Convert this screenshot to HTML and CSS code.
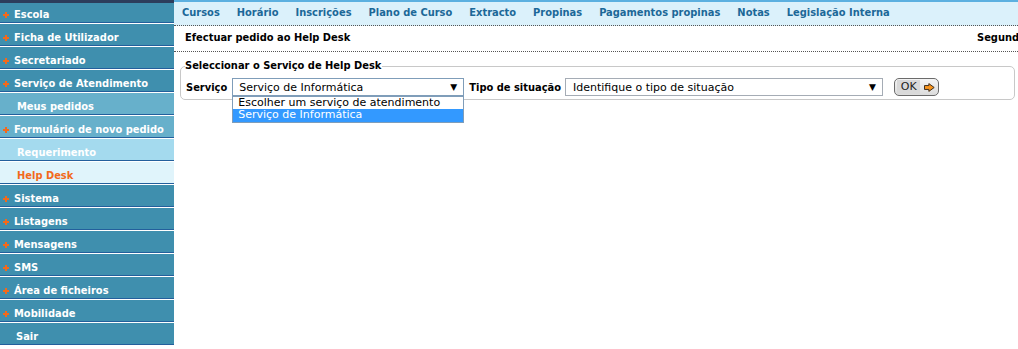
FILE: index.html
```html
<!DOCTYPE html>
<html lang="pt">
<head>
<meta charset="utf-8">
<title>Help Desk</title>
<link rel="stylesheet" href="styles.css">
</head>
<body>
<div class="page">
  <nav class="side">
    <a class="item first"><svg class="pl" width="6" height="6" viewBox="0 0 6 6"><path d="M0 3H6M3 0V6"/></svg>Escola</a>
    <a class="item"><svg class="pl" width="6" height="6" viewBox="0 0 6 6"><path d="M0 3H6M3 0V6"/></svg>Ficha de Utilizador</a>
    <a class="item"><svg class="pl" width="6" height="6" viewBox="0 0 6 6"><path d="M0 3H6M3 0V6"/></svg>Secretariado</a>
    <a class="item"><svg class="pl" width="6" height="6" viewBox="0 0 6 6"><path d="M0 3H6M3 0V6"/></svg>Serviço de Atendimento</a>
    <a class="item lvl1 sub">Meus pedidos</a>
    <a class="item lvl1"><svg class="pl" width="6" height="6" viewBox="0 0 6 6"><path d="M0 3H6M3 0V6"/></svg>Formulário de novo pedido</a>
    <a class="item lvl2 sub">Requerimento</a>
    <a class="item lvl3 sub">Help Desk</a>
    <a class="item"><svg class="pl" width="6" height="6" viewBox="0 0 6 6"><path d="M0 3H6M3 0V6"/></svg>Sistema</a>
    <a class="item"><svg class="pl" width="6" height="6" viewBox="0 0 6 6"><path d="M0 3H6M3 0V6"/></svg>Listagens</a>
    <a class="item"><svg class="pl" width="6" height="6" viewBox="0 0 6 6"><path d="M0 3H6M3 0V6"/></svg>Mensagens</a>
    <a class="item"><svg class="pl" width="6" height="6" viewBox="0 0 6 6"><path d="M0 3H6M3 0V6"/></svg>SMS</a>
    <a class="item"><svg class="pl" width="6" height="6" viewBox="0 0 6 6"><path d="M0 3H6M3 0V6"/></svg>Área de ficheiros</a>
    <a class="item"><svg class="pl" width="6" height="6" viewBox="0 0 6 6"><path d="M0 3H6M3 0V6"/></svg>Mobilidade</a>
    <a class="item exit">Sair</a>
  </nav>
  <main class="main">
    <div class="tabs">
      <a>Cursos</a>
      <a>Horário</a>
      <a>Inscrições</a>
      <a>Plano de Curso</a>
      <a>Extracto</a>
      <a>Propinas</a>
      <a>Pagamentos propinas</a>
      <a>Notas</a>
      <a>Legislação Interna</a>
    </div>
    <div class="head">
      <h1 class="title">Efectuar pedido ao Help Desk</h1>
      <span class="date">Segunda-feira, 15 de Março de 2010</span>
    </div>
    <fieldset class="box">
      <legend class="legend">Seleccionar o Serviço de Help Desk</legend>
      <div class="row">
        <span class="label">Serviço</span>
        <div class="select s1 focus">
          <span class="val">Serviço de Informática</span>
          <span class="arrow">▼</span>
          <ul class="dropdown">
            <li>Escolher um serviço de atendimento</li>
            <li class="sel">Serviço de Informática</li>
          </ul>
        </div>
        <span class="label l2">Tipo de situação</span>
        <div class="select s2">
          <span class="val">Identifique o tipo de situação</span>
          <span class="arrow">▼</span>
        </div>
        <span class="ok">
          <span class="ok-txt">OK</span>
          <svg class="ok-ico" width="11" height="9" viewBox="0 0 11 9"><path d="M0.5 2.5 H5 V0.5 L10.5 4.5 L5 8.5 V6.5 H0.5 Z" fill="#f7941d" stroke="#3a2a1a" stroke-width="1" stroke-linejoin="miter"/></svg>
        </span>
      </div>
    </fieldset>
  </main>
</div>
</body>
</html>
```

FILE: styles.css
```css
html, body {
  margin: 0;
  padding: 0;
}
body {
  width: 1018px;
  height: 349px;
  overflow: hidden;
  background: #fff;
  font-family: "DejaVu Sans Condensed", "DejaVu Sans", sans-serif;
  font-size: 11px;
}
.page {
  display: flex;
  align-items: flex-start;
}
.side {
  width: 174px;
  flex: 0 0 174px;
  display: flex;
  flex-direction: column;
  gap: 1px;
  padding-top: 1px;
  background: #fff;
}
.item {
  display: flex;
  align-items: center;
  box-sizing: border-box;
  height: 22px;
  padding: 7px 0 0 3px;
  line-height: 14px;
  background: #3f8fae;
  border-bottom: 1px solid #235f9c;
  color: #fff;
  font-weight: bold;
  white-space: nowrap;
}
.item.first {
  margin-top: -1px;
  border-top: 1px solid #2c3d5c;
  box-shadow: inset 0 2px 0 #2c3d5c;
  height: 23px;
  padding-top: 6px;
}
.pl {
  flex: 0 0 6px;
  width: 6px;
  height: 6px;
  display: block;
  margin-right: 5px;
  stroke: #f26a1b;
  stroke-width: 2;
  fill: none;
  overflow: visible;
}
.item.sub { padding-left: 17px; }
.item.exit { padding-left: 16px; }
.item.lvl1 { background: #67b0cb; }
.item.lvl2 { background: #a4daee; }
.item.lvl3 { background: #e0f4fb; color: #f26a1b; }

.main {
  flex: 1;
  min-width: 0;
}
.tabs {
  box-sizing: border-box;
  height: 26px;
  border-top: 2px solid #5cb0e0;
  border-bottom: 1px dotted #555;
  background: #dbf1fb;
  display: flex;
  gap: 17px;
  padding: 4px 0 0 8px;
  line-height: 14px;
  white-space: nowrap;
}
.tabs a {
  color: #1c6898;
  font-weight: bold;
}
.head {
  box-sizing: border-box;
  height: 26px;
  display: grid;
  grid-template-columns: 792px max-content;
  padding: 5px 0 0 11px;
  border-bottom: 1px dotted #555;
  overflow: hidden;
  white-space: nowrap;
}
.title {
  margin: 0;
  font-size: 11px;
  font-weight: bold;
  line-height: 14px;
  color: #000;
}
.date {
  font-weight: bold;
  line-height: 14px;
  color: #000;
}
.box {
  margin: 7px 3px 0 6px;
  padding: 4px 4px 2px 4px;
  border: 1px solid #c8c8c8;
  border-radius: 5px;
  min-width: 0;
}
.legend {
  padding: 0 1px 0 0;
  font-weight: bold;
  color: #000;
  line-height: 14px;
}
.row {
  display: flex;
  align-items: center;
  padding-left: 1px;
  height: 20px;
}
.label {
  font-weight: bold;
  color: #000;
  margin-right: 5px;
}
.label.l2 { margin-left: 5px; margin-right: 4px; }
.select {
  position: relative;
  box-sizing: border-box;
  height: 18px;
  border: 1px solid #a5acb5;
  background: #fff;
  display: flex;
  align-items: center;
  padding: 0 6px 0 6px;
  font-family: "DejaVu Sans", sans-serif;
  font-size: 11px;
  color: #000;
  white-space: nowrap;
}
.select.focus { border-color: #7f9db9; }
.s1 { width: 232px; }
.s2 { width: 318px; padding-left: 7px; }
.val { flex: 1; }
.arrow {
  font-size: 9px;
  color: #000;
}
.dropdown {
  position: absolute;
  left: -1px;
  top: 17px;
  width: 232px;
  box-sizing: border-box;
  margin: 0;
  padding: 0;
  list-style: none;
  border: 1px solid #7f9db9;
  background: #fff;
  z-index: 5;
}
.dropdown li {
  height: 12px;
  line-height: 12px;
  padding-left: 5px;
  font-size: 11px;
}
.dropdown li.sel {
  background: #3399ff;
  color: #fff;
  height: 13px;
}
.ok {
  margin-left: 11px;
  box-sizing: border-box;
  width: 45px;
  height: 18px;
  border: 1px solid #6b6b6b;
  border-radius: 5px;
  background: linear-gradient(#f4f4f4, #dcdcdc);
  display: flex;
  align-items: center;
  padding: 1px 3px 1px 2px;
  gap: 4px;
}
.ok-txt {
  background: #d9d9d9;
  width: 24px;
  height: 14px;
  line-height: 14px;
  text-align: center;
  font-family: "DejaVu Sans", sans-serif;
  font-size: 11px;
  color: #222;
}
.ok-ico { display: block; }
```
